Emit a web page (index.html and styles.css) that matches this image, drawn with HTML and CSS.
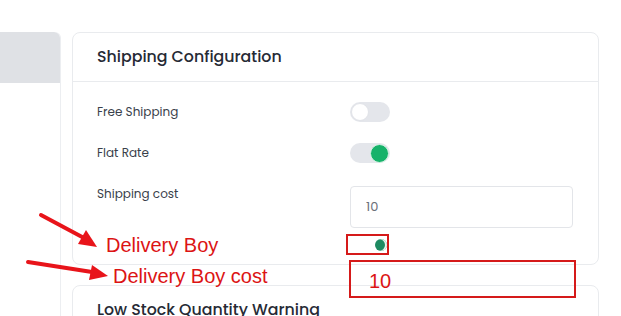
FILE: index.html
```html
<!DOCTYPE html>
<html>
<head>
    <title>Shipping Configuration</title>
    <meta name="viewport" content="width=device-width, initial-scale=1">
    <link rel="stylesheet" href="styles.css">
</head>
<body>
    <div class="page">
        <div class="sidebar">
            <div class="sidebar-head"></div>
        </div>

        <div class="main">
            <div class="card">
                <div class="card-head">Shipping Configuration</div>
                <div class="card-body">
                    <div class="row">
                        <div class="label">Free Shipping</div>
                        <div class="control"><span class="toggle"></span></div>
                    </div>
                    <div class="row">
                        <div class="label">Flat Rate</div>
                        <div class="control"><span class="toggle on"></span></div>
                    </div>
                    <div class="row cost">
                        <div class="label">Shipping cost</div>
                        <div class="control"><div class="input">10</div></div>
                    </div>
                    <div class="row boy">
                        <div class="label"></div>
                        <div class="control"><span class="mark"><span class="dot"></span></span></div>
                    </div>
                </div>
            </div>

            <div class="card second">
                <div class="card-head">Low Stock Quantity Warning</div>
            </div>
        </div>
    </div>

    <!-- annotations drawn on top of the screenshot -->
    <svg class="arrows" width="621" height="316" viewBox="0 0 621 316">
        <line x1="41" y1="215" x2="84" y2="238" stroke="#e8141a" stroke-width="4" stroke-linecap="round"/>
        <polygon points="97,247 78,244 86,230" fill="#e8141a"/>
        <line x1="28" y1="262" x2="92" y2="272" stroke="#e8141a" stroke-width="4" stroke-linecap="round"/>
        <polygon points="108,276 89,280 92,265" fill="#e8141a"/>
    </svg>
    <div class="note note-boy">Delivery Boy</div>
    <div class="note note-cost">Delivery Boy cost</div>
    <div class="cost-box">10</div>
</body>
</html>
```

FILE: styles.css
```css
body {
    margin: 0;
    background-color: #fff;
    color: #222;
    font-family: Poppins, "Open Sans", "Noto Sans", sans-serif;
    overflow: hidden;
}

.page {
    display: flex;
    gap: 11px;
    padding-top: 32px;
    width: 599px;
    height: 284px;
    overflow: hidden;
}

.sidebar {
    width: 60px;
    border-right: 1px solid #eceef1;
    border-top-right-radius: 6px;
    flex-shrink: 0;
}

.sidebar-head {
    height: 51px;
    background-color: #dfe1e5;
    border-top-right-radius: 6px;
}

.main {
    flex: 1;
}

.card {
    border: 1px solid #e9ebee;
    border-radius: 8px;
    background-color: #fff;
}

.card-head {
    height: 48px;
    line-height: 48px;
    padding-left: 24px;
    font-size: 15.8px;
    font-weight: 500;
    color: #262a35;
    border-bottom: 1px solid #e9ebee;
}

.card-body {
    padding: 20px 24px 9px 24px;
}

.row {
    display: flex;
    align-items: center;
    margin-bottom: 21px;
}

.row.cost {
    align-items: flex-start;
    padding-top: 2px;
    margin-bottom: 6px;
}

.row.boy {
    margin-bottom: 0;
}

.label {
    width: 253px;
    font-size: 12px;
    color: #3a3f4b;
}

.row.cost .label {
    line-height: 16px;
}

.control {
    flex: 1;
}

.toggle {
    display: block;
    position: relative;
    width: 40px;
    height: 20px;
    border-radius: 10px;
    background-color: #e4e6eb;
}

.toggle::after {
    content: "";
    position: absolute;
    left: 1px;
    top: 1px;
    width: 16px;
    height: 16px;
    border-radius: 50%;
    background-color: #fff;
    border: 1px solid #e1e3e8;
}

.toggle.on::after {
    left: 20px;
    top: 1px;
    width: 17px;
    height: 17px;
    border: 1px solid #d5f2e3;
    background-color: #17b26a;
}

.input {
    width: 206px;
    height: 40px;
    line-height: 40px;
    padding-left: 15px;
    border: 1px solid #e3e5e9;
    border-radius: 4px;
    font-size: 13px;
    color: #6b707a;
}

.mark {
    display: block;
    width: 39px;
    height: 17px;
    margin-left: -4px;
    border: 2px solid #d51a1a;
    position: relative;
}

.dot {
    position: absolute;
    left: 27px;
    top: 3px;
    width: 12px;
    height: 12px;
    border-radius: 50%;
    background-color: #1e8a62;
    box-shadow: inset -2px 0 0 #e8f5ef;
}

.second {
    margin-top: 20px;
}

.second .card-head {
    border-bottom: none;
}

.arrows {
    position: absolute;
    left: 0;
    top: 0;
}

.note {
    position: absolute;
    font-family: "Liberation Sans", Arial, sans-serif;
    font-size: 20px;
    color: #dc1414;
    white-space: nowrap;
}

.note-boy {
    left: 106px;
    top: 234px;
}

.note-cost {
    left: 113px;
    top: 265px;
}

.cost-box {
    position: absolute;
    left: 349px;
    top: 260px;
    width: 205px;
    height: 34px;
    padding-left: 18px;
    line-height: 38px;
    border: 2px solid #d51a1a;
    font-family: "Liberation Sans", Arial, sans-serif;
    font-size: 20px;
    color: #dc1414;
}
```
